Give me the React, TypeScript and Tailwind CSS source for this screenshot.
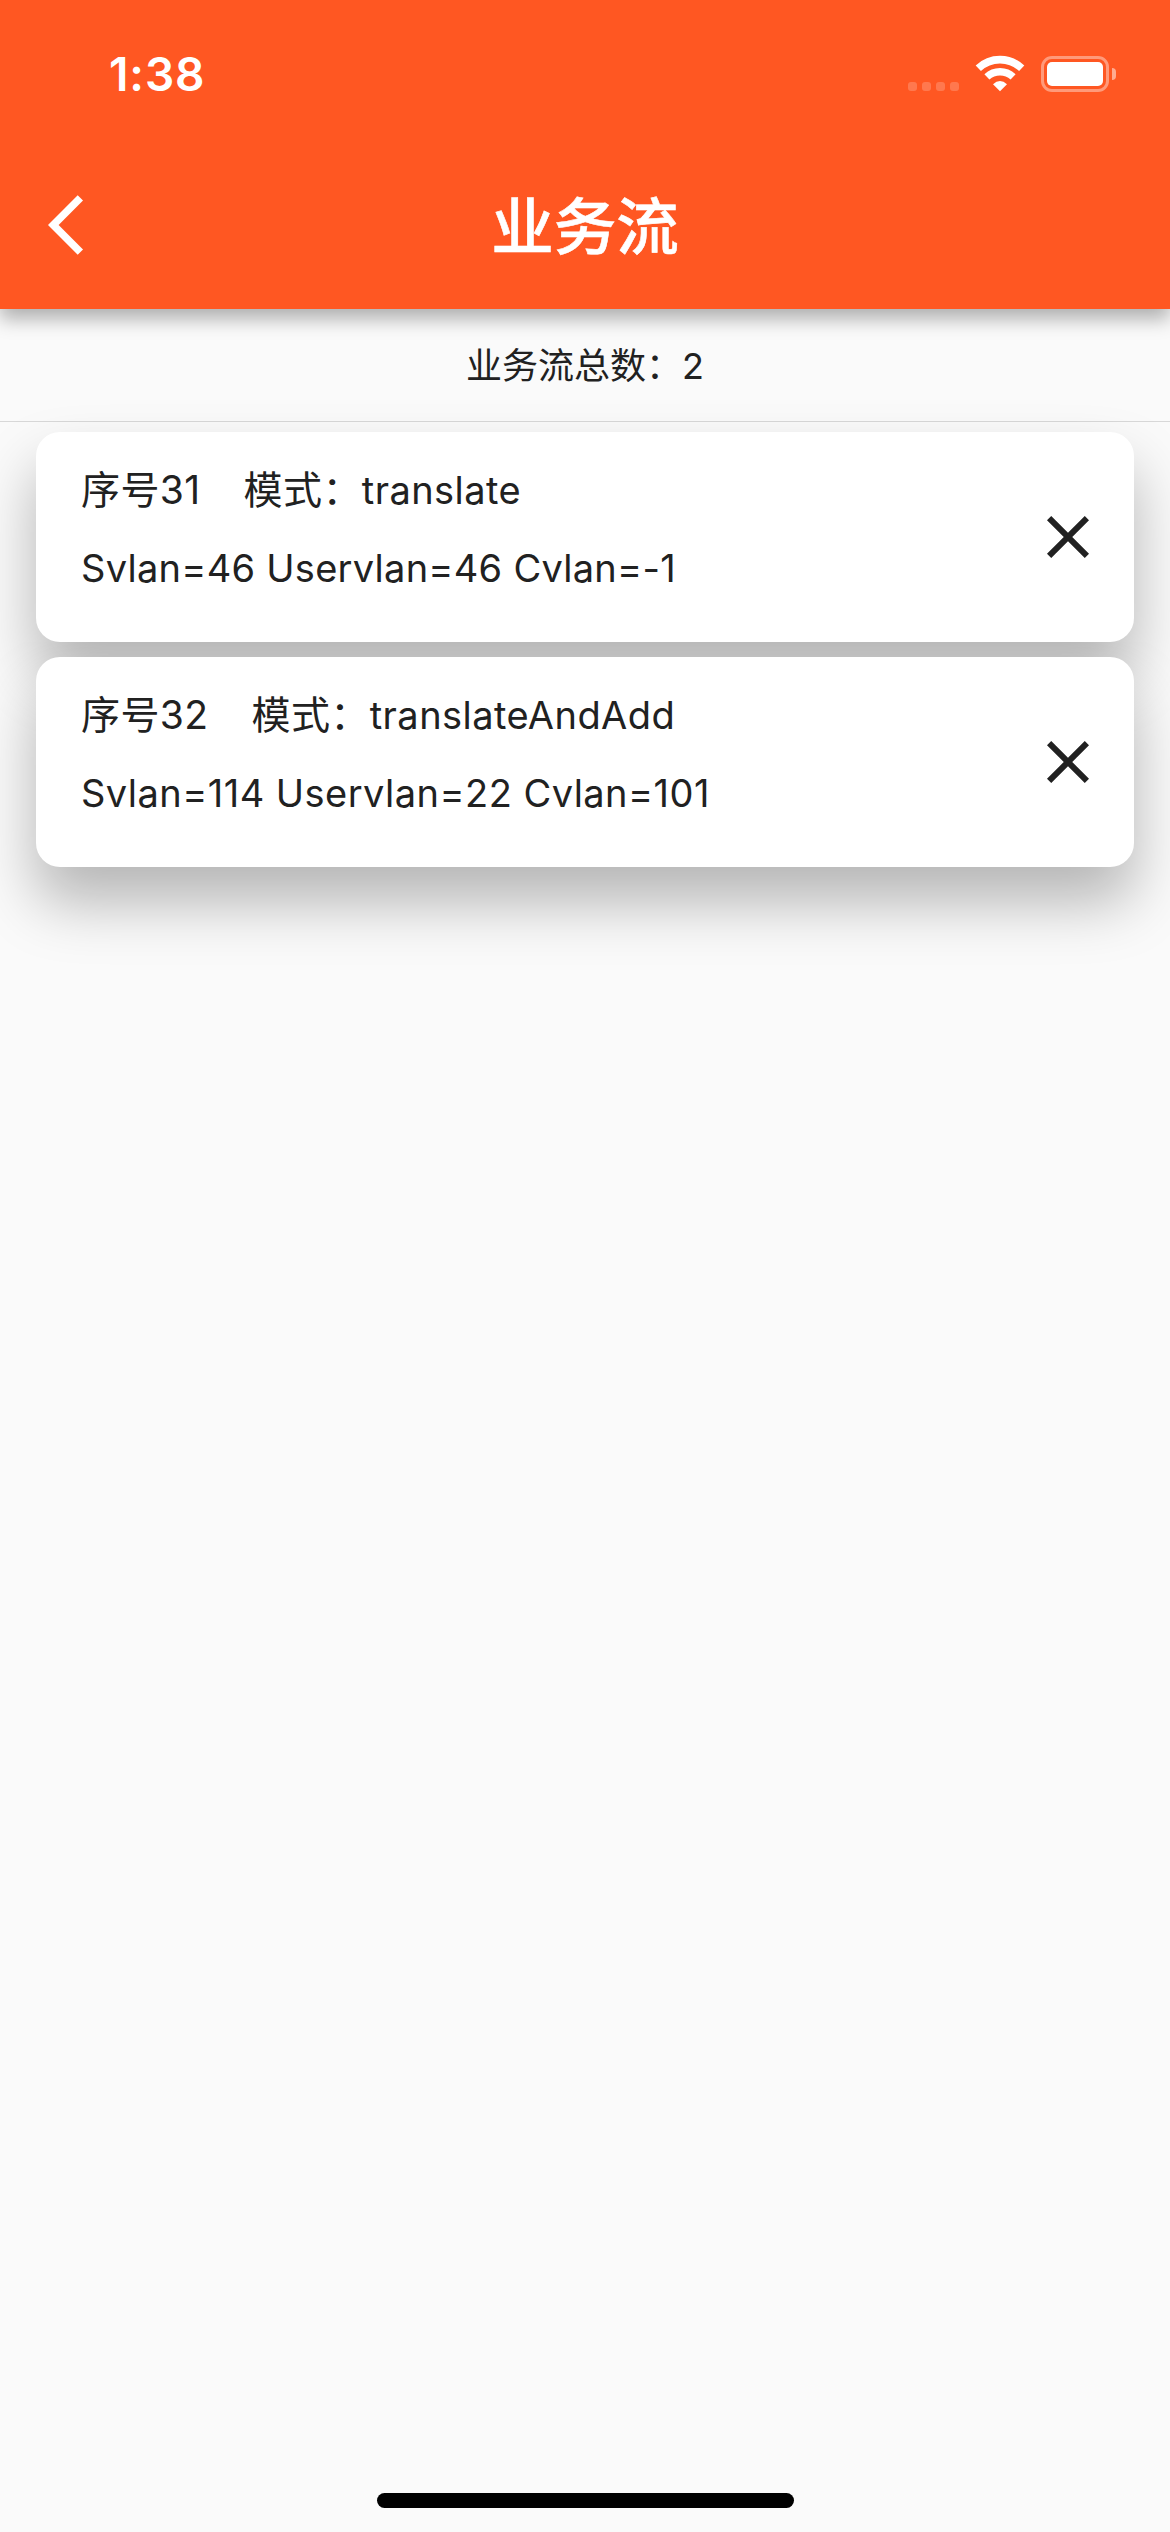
import React from "react";

const FONT = "font-['Inter','Noto_Sans_CJK_SC',sans-serif]";

type Flow = { id: string; mode: string; detail: string; tracking: string };

const flows: Flow[] = [
  { id: "31", mode: "translate", detail: "Svlan=46 Uservlan=46 Cvlan=-1", tracking: "tracking-[0.27px]" },
  { id: "32", mode: "translateAndAdd", detail: "Svlan=114 Uservlan=22 Cvlan=101", tracking: "tracking-[0.46px]" },
];

function StatusBar() {
  return (
    <div className="flex h-[132px] items-start justify-between pl-[109px] pr-[54px] pt-[46px] text-white">
      <span className="text-[46px] font-semibold leading-[56px] tracking-[0.9px]">1:38</span>
      <div className="flex pt-[9px]">
        <div className="mt-[27px] flex gap-[5px]">
          {[0, 1, 2, 3].map((i) => (
            <span key={i} className="h-[9px] w-[9px] rounded-[3px] bg-white/20" />
          ))}
        </div>
        <svg className="ml-[16px] h-[37px] w-[50px]" viewBox="0 0 50 37" fill="none" stroke="#fff">
          <path d="M3.3 13.3A31.5 31.5 0 0 1 46.7 13.3" strokeWidth="7.6" />
          <path d="M11.9 21.9A19.3 19.3 0 0 1 38.1 21.9" strokeWidth="7.4" />
          <path d="M18 29.2Q25 23 32 29.2L25 36.2Z" fill="#fff" stroke="none" />
        </svg>
        <div className="ml-[16px] mt-px h-9 w-[68px] rounded-[11px] border-[3px] border-white/40 p-[3px]">
          <div className="h-full w-full rounded-[5px] bg-white" />
        </div>
        <span className="ml-[3px] mt-[13px] h-3 w-[4px] rounded-r-full bg-white/50" />
      </div>
    </div>
  );
}

function FlowCard({ flow }: { flow: Flow }) {
  return (
    <div className="flex h-[210px] items-center justify-between rounded-[24px] bg-white pl-[45px] pr-[30px] shadow-[0_35px_60px_rgba(0,0,0,0.28)] [clip-path:inset(-15px_-36px_-130px)] first:[clip-path:none]">
      <div className="-mt-[16px] text-[38px] leading-[78px]">
        <div className="flex whitespace-pre">
          <span className="text-[39px] tracking-[0.4px]">序号{flow.id}</span>
          <span className="ml-[43px] text-[39px] tracking-[0.4px]">模式：</span>
          <span className="tracking-[0.45px]">{flow.mode}</span>
        </div>
        <div className={`whitespace-pre ${flow.tracking}`}>{flow.detail}</div>
      </div>
      <svg className="h-[72px] w-[72px]" viewBox="0 0 24 24" fill="#212121">
        <path d="M19 6.41L17.59 5 12 10.59 6.41 5 5 6.41 10.59 12 5 17.59 6.41 19 12 13.41 17.59 19 19 17.59 13.41 12z" />
      </svg>
    </div>
  );
}

export default function App() {
  return (
    <div className={`flex h-[2532px] w-[1170px] flex-col overflow-hidden bg-[#fafafa] text-[#212121] ${FONT}`}>
      <header className="relative z-10 h-[309px] shrink-0 bg-[#ff5722] shadow-[0_10px_18px_rgba(0,0,0,0.3)]">
        <StatusBar />
        <div className="grid h-[186px] grid-cols-[1fr_auto_1fr] items-center text-white">
          <svg className="ml-12 h-[72px] w-[72px]" viewBox="0 0 24 24" fill="#fff">
            <path d="M11.67 3.87L9.9 2.1 0 12l9.9 9.9 1.77-1.77L3.54 12z" />
          </svg>
          <h1 className="pt-[3px] text-[62.5px] font-medium leading-[80px] [-webkit-text-stroke:0.6px_white]">业务流</h1>
        </div>
      </header>
      <div className="flex h-[113px] shrink-0 items-center justify-center border-b border-[#d8d8d8] pt-px text-[36px]">
        业务流总数：2
      </div>
      <main className="flex flex-1 flex-col gap-[15px] px-9 pt-[10px]">
        {flows.map((f) => (
          <FlowCard key={f.id} flow={f} />
        ))}
      </main>
      <div className="mb-6 h-[15px] w-[417px] shrink-0 self-center rounded-full bg-black" />
    </div>
  );
}
